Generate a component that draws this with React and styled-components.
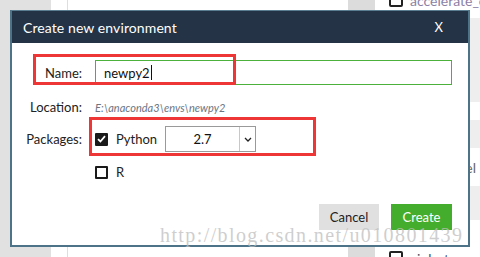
import React from 'react';
import styled, { createGlobalStyle } from 'styled-components';

const GlobalStyle = createGlobalStyle`
  html, body { margin: 0; padding: 0; }
  body {
    width: 480px;
    height: 257px;
    overflow: hidden;
    background: #fff;
    font-family: Lato, "Open Sans", sans-serif;
  }
`;

const Page = styled.div`
  position: relative;
  width: 480px;
  height: 257px;
  display: flex;
  overflow: hidden;
`;

const Sidebar = styled.div`
  flex: none;
  width: 51px;
  background: #e1e1e1;
`;

const Gutter = styled.div`
  flex: none;
  width: 16px;
  border-right: 1px solid #dedede;
`;

const Middle = styled.div`
  flex: 1;
`;

const PkgList = styled.div`
  flex: none;
  width: 132px;
  display: flex;
  flex-direction: column;
  margin-top: -18px;
`;

const PkgRow = styled.div`
  flex: none;
  height: ${p => p.h}px;
  background: ${p => (p.shade ? '#eeeeee' : '#fff')};
  display: flex;
  align-items: center;
`;

const StatusCell = styled.div`
  flex: none;
  width: 27px;
  align-self: stretch;
  background: ${p => (p.grey ? '#dcdcdc' : 'transparent')};
`;

const RowBox = styled.span`
  flex: none;
  box-sizing: border-box;
  width: 14px;
  height: 14px;
  margin-left: 14px;
  border: 2px solid #222;
  border-radius: 2px;
`;

const RowName = styled.span`
  margin-left: 7px;
  font-size: 14px;
  color: ${p => p.color};
  white-space: nowrap;
`;

const RowNote = styled.span`
  margin-left: auto;
  padding-right: 4px;
  font-size: 14px;
  color: #666;
  white-space: nowrap;
`;

const Dialog = styled.div`
  position: absolute;
  left: 10px;
  top: 10px;
  width: 460px;
  height: 237px;
  box-sizing: border-box;
  border: 2px solid #4d7389;
  border-top: 1px solid #5b7d92;
  background: #fff;
  display: flex;
  flex-direction: column;
`;

const Header = styled.div`
  height: 32px;
  background: #243446;
  color: #fff;
  display: flex;
  align-items: center;
  justify-content: space-between;
  padding: 0 25px 0 11px;
`;

const Title = styled.span`
  font-size: 14px;
  letter-spacing: 0.1px;
`;

const Close = styled.span`
  font-size: 13px;
`;

const Body = styled.div`
  display: flex;
  flex-direction: column;
  padding: 17px 16px 0 0;
`;

const Row = styled.div`
  display: flex;
  align-items: center;
  gap: 13px;
  margin-top: ${p => p.mt || 0}px;
  min-height: ${p => p.h || 0}px;
`;

const Label = styled.span`
  flex: none;
  width: 70px;
  text-align: right;
  font-size: 13px;
  color: #222;
`;

const NameInput = styled.div`
  flex: 1;
  height: 25px;
  box-sizing: border-box;
  border: 1px solid #4cb13a;
  display: flex;
  align-items: center;
  padding-left: 8px;
  font-size: 13px;
  color: #111;
`;

const Caret = styled.span`
  display: inline-block;
  width: 1px;
  height: 15px;
  background: #111;
  margin-left: 1px;
`;

const Path = styled.span`
  font-size: 11px;
  font-style: italic;
  color: #6b7583;
`;

const Options = styled.div`
  display: flex;
  align-items: center;
  margin-left: ${p => p.indent || 0}px;
`;

const Check = styled.span`
  flex: none;
  box-sizing: border-box;
  width: 13px;
  height: 13px;
  border: 2px solid #1a1a1a;
  border-radius: 1px;
  background: ${p => (p.on ? '#1a1a1a' : '#fff')};
  display: flex;
  align-items: center;
  justify-content: center;
`;

const OptionText = styled.span`
  margin-left: 8px;
  font-size: 13px;
  color: #222;
`;

const Select = styled.div`
  margin-left: 8px;
  width: 91px;
  height: 26px;
  box-sizing: border-box;
  border: 1px solid #9a9a9a;
  display: flex;
  font-size: 13px;
  color: #111;
`;

const SelectValue = styled.span`
  flex: 1;
  display: flex;
  align-items: center;
  justify-content: center;
`;

const SelectArrow = styled.span`
  flex: none;
  width: 15px;
  border-left: 1px solid #c8c8c8;
  display: flex;
  align-items: center;
  justify-content: center;
`;

const Footer = styled.div`
  display: flex;
  justify-content: flex-end;
  gap: 12px;
  margin-top: 24px;
`;

const Button = styled.div`
  height: 26px;
  width: ${p => p.w}px;
  display: flex;
  align-items: center;
  justify-content: center;
  font-size: 13px;
  background: ${p => (p.primary ? '#44ad2d' : '#e0e0e0')};
  color: ${p => (p.primary ? '#fff' : '#222')};
`;

const Mark = styled.div`
  position: absolute;
  box-sizing: border-box;
  border: 3px solid #ef3636;
  left: ${p => p.x}px;
  top: ${p => p.y}px;
  width: ${p => p.w}px;
  height: ${p => p.h}px;
`;

const Watermark = styled.div`
  position: absolute;
  left: 160px;
  top: 224px;
  font-family: "Liberation Serif", serif;
  font-size: 20px;
  letter-spacing: 1.4px;
  color: rgba(190, 190, 190, 0.75);
  white-space: nowrap;
`;

const rows = [
  { h: 36, name: 'accelerate_cudnn', color: '#8c7fa6', cell: true },
  { h: 84, shade: true },
  { h: 18 },
  { h: 28, shade: true },
  { h: 38, note: 'keras-model' },
  { h: 34, shade: true },
  { h: 18 },
  { h: 40, name: 'aiobotocore', color: '#4b5263', cell: true },
];

export default function App() {
  return (
    <>
      <GlobalStyle />
      <Page>
        <Sidebar />
        <Gutter />
        <Middle />
        <PkgList>
          {rows.map((r, i) => (
            <PkgRow key={i} h={r.h} shade={r.shade}>
              <StatusCell grey={r.cell} />
              {r.name && <RowBox />}
              {r.name && <RowName color={r.color}>{r.name}</RowName>}
              {r.note && <RowNote>{r.note}</RowNote>}
            </PkgRow>
          ))}
        </PkgList>

        <Dialog>
          <Header>
            <Title>Create new environment</Title>
            <Close>X</Close>
          </Header>
          <Body>
            <Row>
              <Label>Name:</Label>
              <NameInput>newpy2<Caret /></NameInput>
            </Row>
            <Row mt={12} h={20}>
              <Label>Location:</Label>
              <Path>E:\anaconda3\envs\newpy2</Path>
            </Row>
            <Row mt={9}>
              <Label>Packages:</Label>
              <Options>
                <Check on>
                  <svg width="9" height="8" viewBox="0 0 9 8">
                    <path d="M1 4.2 L3.4 6.5 L8 1.2" fill="none" stroke="#fff" strokeWidth="1.8" />
                  </svg>
                </Check>
                <OptionText>Python</OptionText>
                <Select>
                  <SelectValue>2.7</SelectValue>
                  <SelectArrow>
                    <svg width="8" height="5" viewBox="0 0 8 5">
                      <path d="M1 1 L4 4 L7 1" fill="none" stroke="#222" strokeWidth="1.3" />
                    </svg>
                  </SelectArrow>
                </Select>
              </Options>
            </Row>
            <Row mt={12} h={16}>
              <Options indent={83}>
                <Check />
                <OptionText>R</OptionText>
              </Options>
            </Row>
            <Footer>
              <Button w={60}>Cancel</Button>
              <Button w={61} primary>Create</Button>
            </Footer>
          </Body>
        </Dialog>

        <Mark x={33} y={54} w={203} h={31} />
        <Mark x={89} y={117} w={227} h={39} />
        <Watermark>http://blog.csdn.net/u010801439</Watermark>
      </Page>
    </>
  );
}
